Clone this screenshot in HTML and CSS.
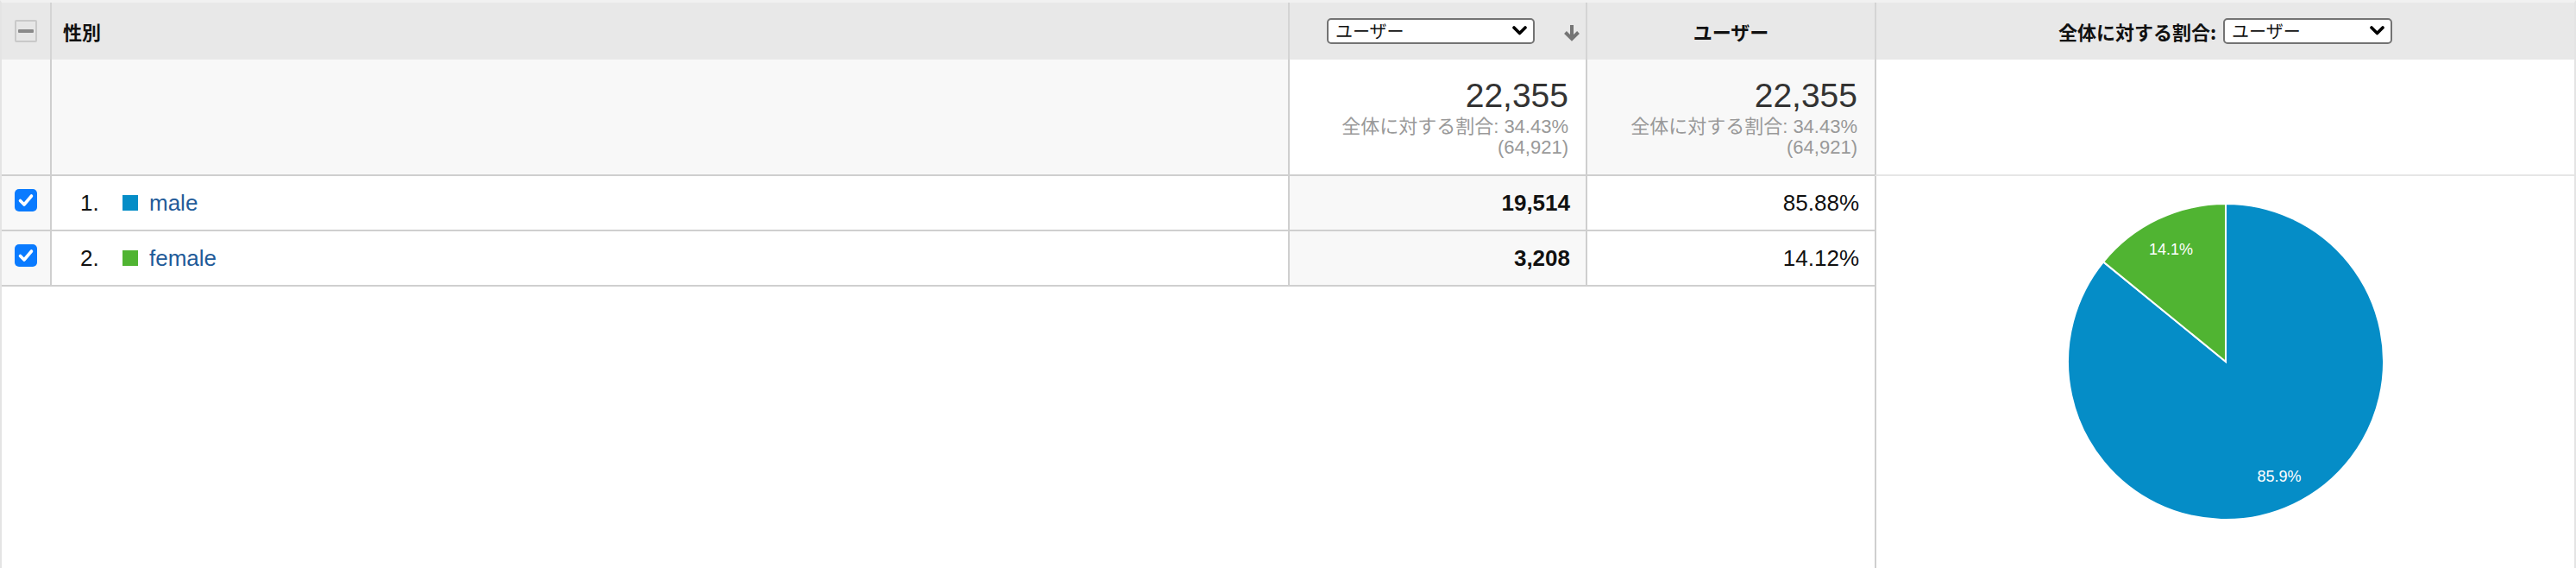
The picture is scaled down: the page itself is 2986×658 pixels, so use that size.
FILE: index.html
```html
<!DOCTYPE html>
<html lang="ja">
<head>
<meta charset="utf-8">
<title>性別</title>
<link rel="stylesheet" href="styles.css">
</head>
<body>
<div class="report">
  <!-- header row -->
  <div class="cell hd chk"><span class="cb-mixed"><span class="dash"></span></span></div>
  <div class="cell hd dim"><span class="hd-label">性別</span></div>
  <div class="cell hd m1">
    <div class="select-wrap wide">
      <select class="select"><option>ユーザー</option></select>
      <svg class="chev" width="17" height="12" viewBox="0 0 17 12"><polyline points="2,2 8.5,8.5 15,2" fill="none" stroke="#000" stroke-width="3.6" stroke-linecap="round" stroke-linejoin="round"/></svg>
    </div>
    <svg class="sort" width="22" height="20" viewBox="0 0 22 20"><line x1="11" y1="1" x2="11" y2="16" stroke="#757575" stroke-width="4"/><polyline points="3.5,9.5 11,17 18.5,9.5" fill="none" stroke="#757575" stroke-width="4" stroke-linejoin="miter"/></svg>
  </div>
  <div class="cell hd m2 center"><span class="hd-label">ユーザー</span></div>
  <div class="cell hd chart-col center">
    <span class="hd-label">全体に対する割合:</span>
    <div class="select-wrap narrow">
      <select class="select"><option>ユーザー</option></select>
      <svg class="chev" width="17" height="12" viewBox="0 0 17 12"><polyline points="2,2 8.5,8.5 15,2" fill="none" stroke="#000" stroke-width="3.6" stroke-linecap="round" stroke-linejoin="round"/></svg>
    </div>
  </div>

  <!-- summary row -->
  <div class="cell sum chk grey"></div>
  <div class="cell sum dim grey"></div>
  <div class="cell sum m1 white">
    <div class="total-block">
      <div class="total">22,355</div>
      <div class="sub">全体に対する割合: 34.43%</div>
      <div class="sub">(64,921)</div>
    </div>
  </div>
  <div class="cell sum m2 grey">
    <div class="total-block">
      <div class="total">22,355</div>
      <div class="sub">全体に対する割合: 34.43%</div>
      <div class="sub">(64,921)</div>
    </div>
  </div>
  <div class="cell sum chart-col chart-sum"></div>

  <!-- chart cell spanning data rows -->
  <div class="chart-col chart-cell">
    <svg class="pie" width="400" height="400" viewBox="0 0 400 400">
      <path d="M200,200 L200,17 A183,183 0 1,1 58.14,84.40 Z" fill="#058dc7" stroke="#fff" stroke-width="2"/>
      <path d="M200,200 L58.14,84.40 A183,183 0 0,1 200,17 Z" fill="#50b432" stroke="#fff" stroke-width="2"/>
      <text x="136.5" y="76" class="pie-label" text-anchor="middle">14.1%</text>
      <text x="262" y="339" class="pie-label" text-anchor="middle">85.9%</text>
    </svg>
  </div>

  <!-- row 1 -->
  <div class="cell row chk grey"><span class="cb"><svg width="26" height="26" viewBox="0 0 26 26"><polyline points="6.5,13.5 11,18 19.5,8" fill="none" stroke="#fff" stroke-width="3.6" stroke-linecap="round" stroke-linejoin="round"/></svg></span></div>
  <div class="cell row dim">
    <span class="idx">1.</span><span class="swatch blue"></span><a class="dim-link" href="#">male</a>
  </div>
  <div class="cell row m1 grey num bold">19,514</div>
  <div class="cell row m2 num">85.88%</div>

  <!-- row 2 -->
  <div class="cell row chk grey"><span class="cb"><svg width="26" height="26" viewBox="0 0 26 26"><polyline points="6.5,13.5 11,18 19.5,8" fill="none" stroke="#fff" stroke-width="3.6" stroke-linecap="round" stroke-linejoin="round"/></svg></span></div>
  <div class="cell row dim">
    <span class="idx">2.</span><span class="swatch green"></span><a class="dim-link" href="#">female</a>
  </div>
  <div class="cell row m1 grey num bold">3,208</div>
  <div class="cell row m2 num">14.12%</div>
</div>
</body>
</html>
```

FILE: styles.css
```css
html, body {
  margin: 0;
  padding: 0;
  background: #fff;
}

body {
  font-family: "Liberation Sans", "Noto Sans CJK JP", sans-serif;
  color: #222;
}

.report {
  display: grid;
  grid-template-columns: 58px 1435px 345px 333px 1fr;
  grid-template-rows: 66px 135px 64px 64px 1fr;
  height: 658px;
  box-sizing: border-box;
  border-top: 3px solid #f1f1f1;
  border-left: 2px solid #e4e4e4;
  border-right: 2px solid #e4e4e4;
}

.cell {
  box-sizing: border-box;
  display: flex;
  align-items: center;
  min-width: 0;
}

.chk, .dim, .m1 {
  border-right: 2px solid #cfcfcf;
}

.hd.chk, .hd.dim, .hd.m1 {
  border-right-color: #d4d4d4;
}

.chart-col {
  box-sizing: border-box;
  border-left: 2px solid #cfcfcf;
}

.hd {
  background: #e8e8e8;
}

.hd.chart-col {
  border-left-color: #d4d4d4;
}

.sum, .row {
  border-bottom: 2px solid #cfcfcf;
}

.chart-sum {
  border-bottom-color: #e6e6e6;
}

.grey { background: #f8f8f8; }
.white { background: #fff; }

.center { justify-content: center; }

.chk {
  justify-content: center;
}

/* header */
.hd-label {
  font-family: "Noto Sans CJK JP", "Liberation Sans", sans-serif;
  font-weight: 700;
  font-size: 22px;
  line-height: 30px;
  color: #111;
}

.hd.dim {
  padding-left: 13px;
}

.cb-mixed {
  width: 26px;
  height: 26px;
  box-sizing: border-box;
  border: 2px solid #c9c9c9;
  border-radius: 2px;
  background: #e6e6e6;
  display: flex;
  align-items: center;
  justify-content: center;
}

.cb-mixed .dash {
  width: 18px;
  height: 4px;
  border-radius: 1px;
  background: #8a8a8a;
}

.hd.m1 {
  justify-content: flex-end;
  padding-right: 5px;
  gap: 32px;
}

.hd.chart-col {
  gap: 8px;
}

.select-wrap {
  position: relative;
  height: 30px;
}

.select-wrap.wide { width: 241px; }
.select-wrap.narrow { width: 196px; }

.select {
  appearance: none;
  -webkit-appearance: none;
  width: 100%;
  height: 30px;
  box-sizing: border-box;
  border: 2px solid #737373;
  border-radius: 5px;
  background: #fff;
  font-family: "Noto Sans CJK JP", "Liberation Sans", sans-serif;
  font-size: 20px;
  line-height: 26px;
  color: #111;
  padding: 0 30px 0 8px;
  margin: 0;
}

.chev {
  position: absolute;
  right: 9px;
  top: 9px;
  pointer-events: none;
}

.sort {
  display: block;
  margin-top: 4px;
}

/* summary */
.sum.m1, .sum.m2 {
  justify-content: flex-end;
  align-items: flex-start;
  padding-right: 20px;
  padding-top: 22px;
}

.total-block {
  text-align: right;
}

.total {
  font-size: 39px;
  line-height: 40px;
  color: #333;
  margin-bottom: 4px;
}

.sub {
  font-size: 22px;
  line-height: 24px;
  color: #999;
}

/* data rows */
.row.dim {
  padding-left: 33px;
  font-size: 26px;
}

.idx {
  width: 49px;
  color: #111;
}

.swatch {
  width: 18px;
  height: 18px;
  margin-right: 13px;
}

.swatch.blue { background: #058dc7; }
.swatch.green { background: #50b432; }

.dim-link {
  color: #1f5b99;
  text-decoration: none;
}

.num {
  justify-content: flex-end;
  padding-right: 18px;
  font-size: 26px;
  color: #111;
}

.bold { font-weight: 700; }

.cb {
  width: 26px;
  height: 26px;
  border-radius: 5px;
  background: #0a7bff;
  display: block;
  margin-top: -6px;
}

.cb svg { display: block; }

/* chart */
.chart-cell {
  grid-column: 5;
  grid-row: 3 / 6;
  display: flex;
  justify-content: center;
  align-items: flex-start;
  padding-top: 15px;
}

.pie {
  display: block;
}

.pie-label {
  font-family: "Liberation Sans", sans-serif;
  font-size: 18px;
  fill: #fff;
}
```
